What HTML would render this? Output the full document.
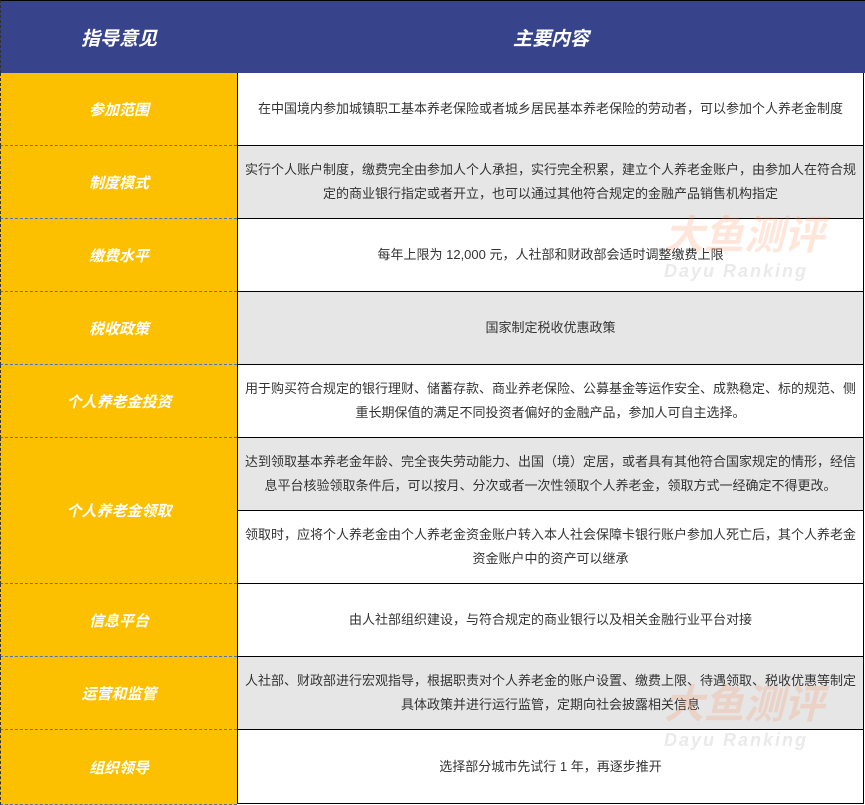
<!DOCTYPE html><html><head><meta charset="utf-8"><style>
*{margin:0;padding:0;box-sizing:border-box}
body{width:865px;height:805px;background:#fff;position:relative;overflow:hidden;font-family:"Liberation Sans","Noto Sans CJK SC",sans-serif}
.h{position:absolute;top:0;height:73px;background:#37448c;color:#fff;font-weight:bold;font-style:italic;font-size:19px;display:flex;align-items:center;justify-content:center}
.l{position:absolute;left:0;width:237px;background:#fdc000;color:#fff;font-weight:bold;font-style:italic;font-size:15px;display:flex;align-items:center;justify-content:center;border-bottom:1px dashed #4a73c9;border-left:1px dashed #333}
.r{position:absolute;left:237px;width:627px;border-left:1.5px solid #000;border-right:1.5px solid #000;border-bottom:1.5px solid #000;color:#333;font-size:13px;line-height:24px;display:flex;align-items:center;justify-content:center;text-align:center;padding:0 6px}
.g{background:#e6e6e6}
.wm{position:absolute;font-weight:bold;font-style:italic;white-space:nowrap}
</style></head><body>
<div class="h" style="left:0;width:237px;border-left:1px dashed #333;border-top:1px solid #000">指导意见</div>
<div class="h" style="left:237px;width:628px;border-top:1px solid #000">主要内容</div>

<div class="l" style="top:73px;height:73px">参加范围</div>
<div class="l" style="top:146px;height:73px">制度模式</div>
<div class="l" style="top:219px;height:73px">缴费水平</div>
<div class="l" style="top:292px;height:73px">税收政策</div>
<div class="l" style="top:365px;height:73px">个人养老金投资</div>
<div class="l" style="top:438px;height:146px">个人养老金领取</div>
<div class="l" style="top:584px;height:73px">信息平台</div>
<div class="l" style="top:657px;height:73px">运营和监管</div>
<div class="l" style="top:730px;height:75px">组织领导</div>

<div class="r" style="top:73px;height:73px">在中国境内参加城镇职工基本养老保险或者城乡居民基本养老保险的劳动者，可以参加个人养老金制度</div>
<div class="r g" style="top:146px;height:73px">实行个人账户制度，缴费完全由参加人个人承担，实行完全积累，建立个人养老金账户，由参加人在符合规定的商业银行指定或者开立，也可以通过其他符合规定的金融产品销售机构指定</div>
<div class="r" style="top:219px;height:73px">每年上限为 12,000 元，人社部和财政部会适时调整缴费上限</div>
<div class="r g" style="top:292px;height:73px">国家制定税收优惠政策</div>
<div class="r" style="top:365px;height:73px">用于购买符合规定的银行理财、储蓄存款、商业养老保险、公募基金等运作安全、成熟稳定、标的规范、侧重长期保值的满足不同投资者偏好的金融产品，参加人可自主选择。</div>
<div class="r g" style="top:438px;height:73px">达到领取基本养老金年龄、完全丧失劳动能力、出国（境）定居，或者具有其他符合国家规定的情形，经信息平台核验领取条件后，可以按月、分次或者一次性领取个人养老金，领取方式一经确定不得更改。</div>
<div class="r" style="top:511px;height:73px">领取时，应将个人养老金由个人养老金资金账户转入本人社会保障卡银行账户参加人死亡后，其个人养老金资金账户中的资产可以继承</div>
<div class="r" style="top:584px;height:73px">由人社部组织建设，与符合规定的商业银行以及相关金融行业平台对接</div>
<div class="r g" style="top:657px;height:73px">人社部、财政部进行宏观指导，根据职责对个人养老金的账户设置、缴费上限、待遇领取、税收优惠等制定具体政策并进行运行监管，定期向社会披露相关信息</div>
<div class="r" style="top:730px;height:74px">选择部分城市先试行 1 年，再逐步推开</div>

<div class="wm" style="left:664px;top:212px;font-size:40px;line-height:48px;color:rgba(253,140,90,.22)">大鱼测评</div>
<div class="wm" style="left:664px;top:260px;font-size:18px;line-height:22px;color:rgba(170,170,170,.25);letter-spacing:2px">Dayu Ranking</div>
<div class="wm" style="left:664px;top:681px;font-size:40px;line-height:48px;color:rgba(253,140,90,.22)">大鱼测评</div>
<div class="wm" style="left:664px;top:729px;font-size:18px;line-height:22px;color:rgba(170,170,170,.25);letter-spacing:2px">Dayu Ranking</div>
</body></html>
